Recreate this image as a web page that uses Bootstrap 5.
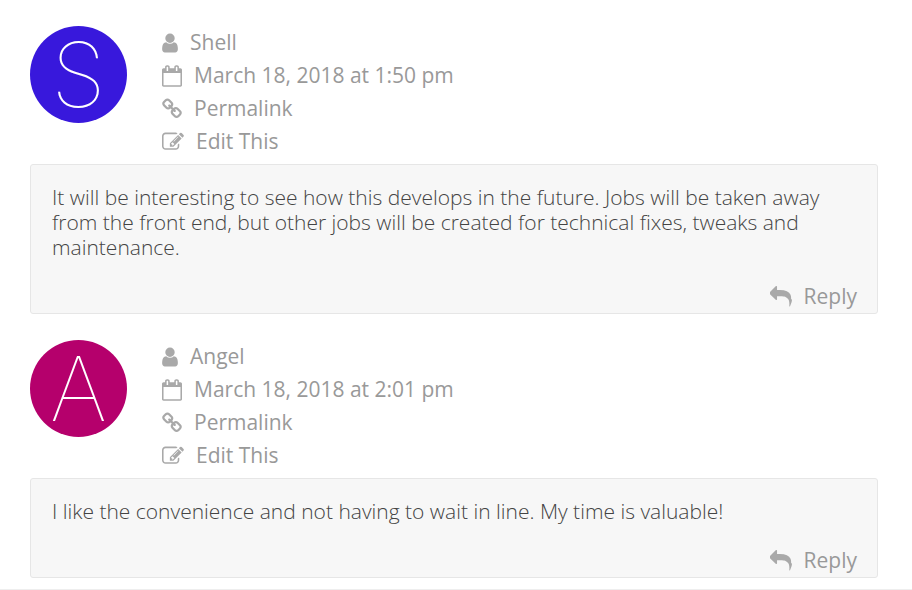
<!DOCTYPE html>
<html lang="en">
<head>
<meta charset="utf-8">
<meta name="viewport" content="width=device-width, initial-scale=1">
<title>Comments</title>
<link href="https://cdn.jsdelivr.net/npm/bootstrap@5.3.0/dist/css/bootstrap.min.css" rel="stylesheet">
<style>
body { font-family: "Open Sans", sans-serif; font-size: 21px; color: #444; background: #fff; }
.comments { padding: 26px 34px 11px 30px; border-bottom: 1px solid #eee; }
.comment + .comment { margin-top: 26px; }
.comment-head { gap: 35px; margin-bottom: 6px; }
.avatar { width: 97px; height: 97px; font-family: Inter, sans-serif; font-weight: 100; font-size: 89px; line-height: 97px; color: #fff; }
.avatar-s { background: #3818dc; }
.avatar-a { background: #b5006c; }
.meta-line { gap: 12px; line-height: 33px; color: #999; }
.meta-line svg { height: 22px; fill: #a9a9a9; }
.comment-body { background: #f7f7f7; border: 1px solid #e6e6e6; border-radius: 3px; padding: 20px 20px 0 21px; }
.comment-text { font-weight: 300; line-height: 25px; margin-bottom: 20px; }
</style>
<script src="https://cdn.jsdelivr.net/npm/bootstrap@5.3.0/dist/js/bootstrap.bundle.min.js"></script>
</head>
<body>
<svg class="d-none" aria-hidden="true">
  <symbol id="user" viewBox="256 0 1280 1792"><path d="M1536 1399q0 109-62.5 187t-150.5 78h-854q-88 0-150.5-78t-62.5-187q0-85 8.5-160.5t31.5-152 58.5-131 94-89 134.5-34.5q131 128 313 128t313-128q76 0 134.5 34.5t94 89 58.5 131 31.5 152 8.5 160.5zm-256-887q0 159-112.5 271.5t-271.5 112.5-271.5-112.5-112.5-271.5 112.5-271.5 271.5-112.5 271.5 112.5 112.5 271.5z"/></symbol>
  <symbol id="calendar" viewBox="64 0 1664 1792"><path d="M192 1664h1408v-1024h-1408v1024zm384-1216v-288q0-14-9-23t-23-9h-64q-14 0-23 9t-9 23v288q0 14 9 23t23 9h64q14 0 23-9t9-23zm768 0v-288q0-14-9-23t-23-9h-64q-14 0-23 9t-9 23v288q0 14 9 23t23 9h64q14 0 23-9t9-23zm384-64v1280q0 52-38 90t-90 38h-1408q-52 0-90-38t-38-90v-1280q0-52 38-90t90-38h128v-96q0-66 47-113t113-47h64q66 0 113 47t47 113v96h384v-96q0-66 47-113t113-47h64q66 0 113 47t47 113v96h128q52 0 90 38t38 90z"/></symbol>
  <symbol id="link" viewBox="64 0 1664 1792"><path d="M1520 1216q0-40-28-68l-208-208q-28-28-68-28-42 0-72 32 3 3 19 18.5t21.5 21.5 15 19 13 25.5 3.5 27.5q0 40-28 68t-68 28q-15 0-27.5-3.5t-25.5-13-19-15-21.5-21.5-18.5-19q-33 31-33 73 0 40 28 68l206 207q27 27 68 27 40 0 68-26l147-146q28-28 28-67zm-703-705q0-40-28-68l-206-207q-28-28-68-28-39 0-68 27l-147 146q-28 28-28 67 0 40 28 68l208 208q27 27 68 27 42 0 72-31-3-3-19-18.5t-21.5-21.5-15-19-13-25.5-3.5-27.5q0-40 28-68t68-28q15 0 27.5 3.5t25.5 13 19 15 21.5 21.5 18.5 19q33-31 33-73zm895 705q0 120-85 203l-147 146q-83 83-203 83-121 0-204-85l-206-207q-83-83-83-203 0-123 88-209l-88-88q-86 88-208 88-120 0-204-84l-208-208q-84-84-84-204t85-203l147-146q83-83 203-83 121 0 204 85l206 207q83 83 83 203 0 123-88 209l88 88q86-88 208-88 120 0 204 84l208 208q84 84 84 204z"/></symbol>
  <symbol id="edit" viewBox="0 0 1792 1792"><path d="M888 1184l116-116-152-152-116 116v56h96v96h56zm440-720q-16-16-33 1l-350 350q-17 17-1 33t33-1l350-350q17-17 1-33zm80 594v190q0 119-84.5 203.5t-203.5 84.5h-832q-119 0-203.5-84.5t-84.5-203.5v-832q0-119 84.5-203.5t203.5-84.5h832q63 0 117 25 15 7 18 23 3 17-9 29l-49 49q-14 14-32 8-23-6-45-6h-832q-66 0-113 47t-47 113v832q0 66 47 113t113 47h832q66 0 113-47t47-113v-126q0-13 9-22l64-64q15-15 35-7t20 29zm-96-738l288 288-672 672h-288v-288zm444 132l-92 92-288-288 92-92q28-28 68-28t68 28l152 152q28 28 28 68t-28 68z"/></symbol>
  <symbol id="reply" viewBox="0 0 1792 1792"><path d="M1792 1120q0 166-127 451-3 7-10.5 24t-13.5 30-13 22q-12 17-28 17-15 0-23.5-10t-8.5-25q0-9 2.5-26.5t2.5-23.5q5-68 5-123 0-112-19.5-200.5t-54-153.5-89-112-118-80-145.5-48-166-25.5-189-7.5h-224v256q0 26-19 45t-45 19-45-19l-512-512q-19-19-19-45t19-45l512-512q19-19 45-19t45 19 19 45v256h224q713 0 875 403 53 134 53 333z"/></symbol>
</svg>
<main class="comments">
  <article class="comment">
    <header class="comment-head d-flex align-items-start">
      <div class="avatar avatar-s rounded-circle text-center flex-shrink-0" aria-hidden="true">S</div>
      <div>
        <div class="meta-line d-flex align-items-center"><svg width="16"><use href="#user"/></svg><span>Shell</span></div>
        <div class="meta-line d-flex align-items-center"><svg width="20"><use href="#calendar"/></svg><time datetime="2018-03-18T13:50">March 18, 2018 at 1:50 pm</time></div>
        <a href="#" class="meta-line d-flex align-items-center text-decoration-none"><svg width="20"><use href="#link"/></svg>Permalink</a>
        <a href="#" class="meta-line d-flex align-items-center text-decoration-none"><svg width="22"><use href="#edit"/></svg>Edit This</a>
      </div>
    </header>
    <div class="comment-body">
      <p class="comment-text">It will be interesting to see how this develops in the future. Jobs will be taken away from the front end, but other jobs will be created for technical fixes, tweaks and maintenance.</p>
      <div class="d-flex justify-content-end"><a href="#" class="meta-line d-flex align-items-center text-decoration-none"><svg width="22"><use href="#reply"/></svg>Reply</a></div>
    </div>
  </article>
  <article class="comment">
    <header class="comment-head d-flex align-items-start">
      <div class="avatar avatar-a rounded-circle text-center flex-shrink-0" aria-hidden="true">A</div>
      <div>
        <div class="meta-line d-flex align-items-center"><svg width="16"><use href="#user"/></svg><span>Angel</span></div>
        <div class="meta-line d-flex align-items-center"><svg width="20"><use href="#calendar"/></svg><time datetime="2018-03-18T14:01">March 18, 2018 at 2:01 pm</time></div>
        <a href="#" class="meta-line d-flex align-items-center text-decoration-none"><svg width="20"><use href="#link"/></svg>Permalink</a>
        <a href="#" class="meta-line d-flex align-items-center text-decoration-none"><svg width="22"><use href="#edit"/></svg>Edit This</a>
      </div>
    </header>
    <div class="comment-body">
      <p class="comment-text">I like the convenience and not having to wait in line. My time is valuable!</p>
      <div class="d-flex justify-content-end"><a href="#" class="meta-line d-flex align-items-center text-decoration-none"><svg width="22"><use href="#reply"/></svg>Reply</a></div>
    </div>
  </article>
</main>
</body>
</html>
